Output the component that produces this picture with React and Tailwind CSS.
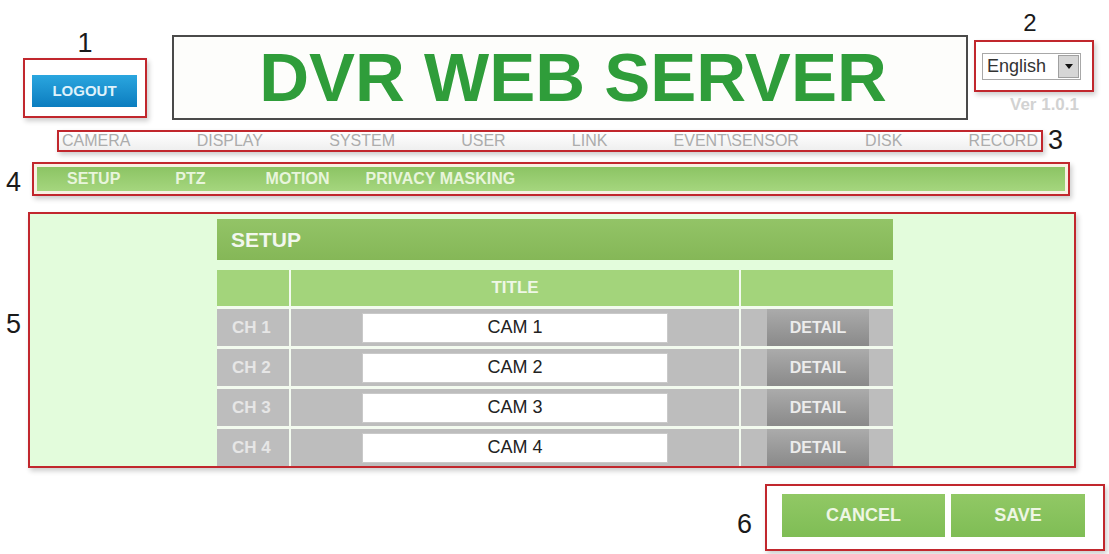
const menu = ['CAMERA', 'DISPLAY', 'SYSTEM', 'USER', 'LINK', 'EVENT\\SENSOR', 'DISK', 'RECORD'];
const channels = [1, 2, 3, 4];

// red callout frame used around each numbered part
const callout = 'border-2 border-[#c1272d] shadow-[2px_3px_5px_rgba(0,0,0,0.2)]';

function Num({ children, className = '' }) {
  return <div className={`text-[27px] leading-[27px] text-[#1a1a1a] ${className}`}>{children}</div>;
}

function LangSelect() {
  return (
    <div className="w-[99px] h-[27px] flex border border-[#a8a8a8] bg-white">
      <span className="flex-1 pl-[4px] text-[18px] leading-[25px] text-[#333]">English</span>
      <span className="w-[21px] my-[1px] mr-[1px] bg-[#d6d6d6] border border-[#a0a0a0] flex items-center justify-center">
        <svg width="8" height="5" viewBox="0 0 8 5">
          <polygon points="0,0 8,0 4,5" fill="#111" />
        </svg>
      </span>
    </div>
  );
}

export default function App() {
  return (
    <div className="w-[1109px] h-[554px] bg-white overflow-hidden font-['Liberation_Sans',Arial,sans-serif]">
      {/* Header */}
      <div className="flex h-[120px]">
        <div className="w-[172px] pl-[23px] pt-[30px]">
          <Num className="w-[124px] text-center">1</Num>
          <div className={`${callout} mt-[1px] w-[124px] h-[60px] pl-[7px] pt-[15px]`}>
            <button className="w-[105px] h-[32px] bg-gradient-to-b from-[#2aa6df] to-[#0a7dbf] text-[15px] font-bold text-[#dff2fb]">
              LOGOUT
            </button>
          </div>
        </div>

        <div className="mt-[35px] w-[796px] h-[85px] border-2 border-[#4a4a4a] bg-[#fdfdfb] flex items-center justify-center">
          <h1 className="pl-[6px] text-[69px] leading-none font-bold text-[#2f9d3a]">DVR WEB SERVER</h1>
        </div>

        <div className="ml-[6px] w-[120px] pt-[11px]">
          <div className="text-center text-[24px] leading-[24px] text-[#1a1a1a] pr-[8px]">2</div>
          <div className={`${callout} mt-[5px] h-[52px] pl-[6px] pt-[11px]`}>
            <LangSelect />
          </div>
          <div className="mt-[3px] pr-[15px] text-right text-[17px] leading-[20px] font-bold text-[#d2d2d2]">Ver 1.0.1</div>
        </div>
      </div>

      {/* Main menu */}
      <div className="mt-[10px] flex items-start">
        <div className={`${callout} ml-[57px] w-[986px] h-[22px] px-[3px] flex items-center justify-between bg-gradient-to-b from-white to-[#efefef]`}>
          {menu.map((m) => (
            <span key={m} className="text-[16px] leading-[18px] text-[#acacac]">{m}</span>
          ))}
        </div>
        <Num className="ml-[5px] -mt-[3px]">3</Num>
      </div>

      {/* Sub menu */}
      <div className="mt-[8px] flex items-start">
        <Num className="w-[32px] pl-[6px] pt-[7px]">4</Num>
        <div className={`${callout} w-[1038px] h-[34px] p-[3px] bg-[#f7f1e2]`}>
          <div className="h-full bg-gradient-to-b from-[#8cc464] to-[#a5d67e] flex items-center pl-[30px] text-[16px] font-bold text-[#e8f5dc]">
            <span>SETUP</span>
            <span className="ml-[55px]">PTZ</span>
            <span className="ml-[60px]">MOTION</span>
            <span className="ml-[36px]">PRIVACY MASKING</span>
          </div>
        </div>
      </div>

      {/* Setup panel */}
      <div className="mt-[16px] flex items-start">
        <Num className="w-[28px] pl-[6px] pt-[99px]">5</Num>
        <div className={`${callout} w-[1048px] h-[256px] bg-[#e3fcdc] pl-[187px] pt-[5px]`}>
          <div className="w-[676px]">
            <div className="h-[41px] pl-[14px] flex items-center bg-gradient-to-b from-[#93c467] to-[#85b757] text-[21px] font-bold text-[#f2f7ee]">
              SETUP
            </div>
            <div className="mt-[10px] grid grid-cols-[72px_448px_152px] gap-x-[2px] gap-y-[3px] bg-[#f3fbef]">
              <div className="h-[36px] bg-[#a3d47b]" />
              <div className="h-[36px] bg-[#a3d47b] flex items-center justify-center text-[17px] font-bold text-[#eef7e6]">TITLE</div>
              <div className="h-[36px] bg-[#a3d47b]" />
              {channels.map((n) => (
                <div key={n} className="contents">
                  <div className="h-[37px] bg-[#bdbdbd] pl-[15px] flex items-center text-[17px] font-bold text-[#e6e6e6]">CH {n}</div>
                  <div className="h-[37px] bg-[#bdbdbd] pl-[71px] flex items-center">
                    <div className="w-[306px] h-[30px] bg-white border border-[#c9c9c9] flex items-center justify-center text-[18px] text-[#222]">
                      CAM {n}
                    </div>
                  </div>
                  <div className="h-[37px] bg-[#bdbdbd] pl-[26px]">
                    <button className="w-[102px] h-full bg-gradient-to-b from-[#ababab] to-[#8a8a8a] text-[16px] font-bold text-[#ececec]">
                      DETAIL
                    </button>
                  </div>
                </div>
              ))}
            </div>
          </div>
        </div>
      </div>

      {/* Cancel / save */}
      <div className="mt-[16px] flex justify-end items-start pr-[4px]">
        <Num className="pt-[27px]">6</Num>
        <div className={`${callout} ml-[13px] w-[340px] h-[67px] pl-[15px] pt-[8px] flex gap-[6px]`}>
          <button className="w-[163px] h-[43px] bg-gradient-to-b from-[#91c865] to-[#7fbd55] text-[18px] font-bold text-[#eef6e4]">CANCEL</button>
          <button className="w-[134px] h-[43px] bg-gradient-to-b from-[#91c865] to-[#7fbd55] text-[18px] font-bold text-[#eef6e4]">SAVE</button>
        </div>
      </div>
    </div>
  );
}
